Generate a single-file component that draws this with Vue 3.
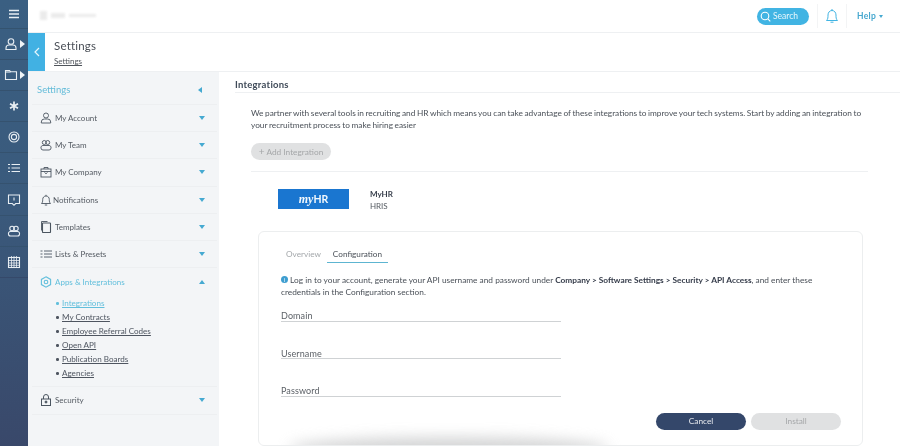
<script setup>
const railItems = [
  { id: 'person', arrow: true },
  { id: 'folder', arrow: true },
  { id: 'star' },
  { id: 'target' },
  { id: 'list' },
  { id: 'message' },
  { id: 'team' },
  { id: 'calendar' }
]
const menu = [
  { id: 'person', label: 'My Account' },
  { id: 'team', label: 'My Team' },
  { id: 'company', label: 'My Company' },
  { id: 'bell', label: 'Notifications', tight: true },
  { id: 'templates', label: 'Templates' },
  { id: 'list', label: 'Lists & Presets' }
]
const subs = ['Integrations', 'My Contracts', 'Employee Referral Codes', 'Open API', 'Publication Boards', 'Agencies']
const fields = ['Domain', 'Username', 'Password']
</script>

<template>
  <div class="app">
    <nav class="rail">
      <div class="rail-top">
        <svg width="12" height="10" viewBox="0 0 12 10"><path d="M1 1.500h10M1 5h10M1 8.500h10" stroke="#e8eef3" stroke-width="1.300" fill="none"/></svg>
      </div>
      <div v-for="item in railItems" :key="item.id" class="rail-item">
        <svg class="ri" width="14" height="14" viewBox="0 0 14 14" fill="none" stroke="#e8eef3" stroke-width="1.100">
          <template v-if="item.id === 'person'"><circle cx="7" cy="4.500" r="2.800"/><path d="M2 12.500v-1.500a3 3 0 0 1 3-3h4a3 3 0 0 1 3 3v1.500z"/></template>
          <template v-else-if="item.id === 'folder'"><path d="M1.500 11.500v-9h4l1 1.200h6v7.800z"/><path d="M1.500 4h5"/></template>
          <template v-else-if="item.id === 'star'"><path d="M7 2.500v9M3 4.700l8 4.600M11 4.700l-8 4.600" stroke-width="1.700"/></template>
          <template v-else-if="item.id === 'target'"><circle cx="7" cy="7" r="5"/><circle cx="7" cy="7" r="2.600"/></template>
          <template v-else-if="item.id === 'list'"><path d="M4.500 3.500h8.500M4.500 7h8.500M4.500 10.500h8.500M1 3.500h2M1 7h2M1 10.500h2" stroke-width="1.200"/></template>
          <template v-else-if="item.id === 'message'"><path d="M1.500 2h11v8.500h-3.800l-1.700 1.800-1.700-1.800h-3.800z"/><path d="M7 4.500v3"/></template>
          <template v-else-if="item.id === 'team'"><circle cx="5" cy="4.500" r="2.200"/><circle cx="9" cy="4.500" r="2.200"/><path d="M1.500 10a2 2 0 0 1 2-2.500h7a2 2 0 0 1 2 2.500 2 2 0 0 1-2 2h-7a2 2 0 0 1-2-2z"/></template>
          <template v-else><rect x="1.500" y="2.500" width="11" height="10"/><path d="M1.500 5.500h11M1.500 8h11M1.500 10.300h11M4.500 1v11.500M7 1v11.500M9.500 1v11.500" stroke-width=".8"/></template>
        </svg>
        <span v-if="item.arrow" class="rail-arrow"></span>
      </div>
    </nav>

    <div class="column">
      <header class="topbar">
        <div class="logo-blur"><span></span><span></span><span></span></div>
        <div class="top-actions">
          <button class="search">
            <svg width="11" height="11" viewBox="0 0 11 11" fill="none" stroke="#fff" stroke-width="1.100"><circle cx="5" cy="5" r="3.800"/><path d="M7.800 7.800l2.500 2.500"/></svg>
            Search
          </button>
          <div class="bell-box">
            <svg width="14" height="16" viewBox="0 0 14 16" fill="none" stroke="#41b4e3" stroke-width="1"><path d="M1.500 12.500c1.500-1.500 1.500-3 1.500-5.500 0-2.500 1.700-4.500 4-4.500s4 2 4 4.500c0 2.500 0 4 1.500 5.500z"/><path d="M7 1v1.500M5.500 14.200h3"/></svg>
          </div>
          <div class="help">Help <span class="caret-down small"></span></div>
        </div>
      </header>

      <div class="page-head">
        <div class="back">
          <svg width="6" height="10" viewBox="0 0 6 10" fill="none" stroke="#e6f6fc" stroke-width="1.200"><path d="M5 1L1 5l4 4"/></svg>
        </div>
        <div class="crumbs">
          <div class="page-title">Settings</div>
          <a class="crumb">Settings</a>
        </div>
      </div>

      <div class="body">
        <aside class="side">
          <div class="side-head">
            <span>Settings</span>
            <span class="caret-left"></span>
          </div>
          <div v-for="m in menu" :key="m.label" class="row">
            <svg class="mi" width="12" height="12" viewBox="0 0 12 12" fill="none" stroke="#4b5560" stroke-width=".9">
              <template v-if="m.id === 'person'"><circle cx="6" cy="3.500" r="2.500"/><path d="M1.300 11v-1a3 3 0 0 1 3-3h3.400a3 3 0 0 1 3 3v1z"/></template>
              <template v-else-if="m.id === 'team'"><circle cx="4.300" cy="3.500" r="2"/><circle cx="7.700" cy="3.500" r="2"/><path d="M1 9a2 2 0 0 1 2-2.500h6a2 2 0 0 1 2 2.500 2 2 0 0 1-2 2h-6a2 2 0 0 1-2-2z"/></template>
              <template v-else-if="m.id === 'company'"><rect x="1" y="3" width="10" height="8"/><path d="M4 3v-1.500h4v1.500M1 5.500h10M4.500 6.500l1.500 1.200 1.500-1.200"/></template>
              <template v-else-if="m.id === 'bell'"><path d="M1.500 9.500c1-1 1.200-2 1.200-4 0-2 1.300-3.500 3.300-3.500s3.300 1.500 3.300 3.500c0 2 .2 3 1.200 4z"/><path d="M6 .8v1.200M4.800 11h2.400"/></template>
              <template v-else-if="m.id === 'templates'"><rect x="2.500" y="2" width="8" height="9.500" rx=".6" stroke-width="1.100"/><path d="M1.500 9.500v-9h6"/></template>
              <template v-else><path d="M4 3h8M4 6h8M4 9h8M.5 3h2M.5 6h2M.5 9h2"/></template>
            </svg>
            <span class="row-label" :class="{ tight: m.tight }">{{ m.label }}</span>
            <span class="caret-down"></span>
          </div>
          <div class="group">
            <div class="row row-open">
              <svg class="mi" width="12" height="12" viewBox="0 0 12 12" fill="none" stroke="#62bfdc" stroke-width="1.100"><path d="M6 .8l4.600 2.600v5.200L6 11.200 1.400 8.600V3.400z"/><circle cx="6" cy="6" r="1.800"/></svg>
              <span class="row-label">Apps &amp; Integrations</span>
              <span class="caret-up"></span>
            </div>
            <ul class="subs">
              <li v-for="(s, i) in subs" :key="s" :class="{ on: i === 0 }"><a>{{ s }}</a></li>
            </ul>
          </div>
          <div class="row">
            <svg class="mi" width="12" height="12" viewBox="0 0 12 12" fill="none" stroke="#4b5560" stroke-width="1"><rect x="1.500" y="5" width="9" height="6.500"/><path d="M3.500 5v-2a2.500 2.500 0 0 1 5 0v2"/><circle cx="6" cy="8" r="1" fill="#4b5560"/></svg>
            <span class="row-label">Security</span>
            <span class="caret-down"></span>
          </div>
        </aside>

        <main class="main">
          <h2 class="main-title">Integrations</h2>
          <section class="content">
            <p class="intro">We partner with several tools in recruiting and HR which means you can take advantage of these integrations to improve your tech systems. Start by adding an integration to your recruitment process to make hiring easier</p>
            <button class="add"><span class="plus">+</span> Add Integration</button>
            <div class="provider">
              <div class="brand"><i>my</i>HR</div>
              <div class="provider-text">
                <strong>MyHR</strong>
                <span>HRIS</span>
              </div>
            </div>
          </section>
          <section class="card">
            <div class="tabs">
              <span class="tab">Overview</span>
              <span class="tab active">Configuration</span>
            </div>
            <p class="note">
              <span class="info">i</span> Log in to your account, generate your API username and password under <b>Company &gt; Software Settings &gt; Security &gt; API Access</b>, and enter these credentials in the Configuration section.
            </p>
            <div class="fields">
              <div v-for="f in fields" :key="f" class="field">{{ f }}</div>
            </div>
            <div class="actions">
              <button class="cancel">Cancel</button>
              <button class="install">Install</button>
            </div>
            <div class="smudge"></div>
          </section>
        </main>
      </div>
    </div>
  </div>
</template>

<style>
html, body { margin: 0; background: #fff; overflow: hidden; }
</style>

<style scoped>
.app { display: flex; width: 900px; height: 446px; overflow: hidden; font-family: Lato, "Open Sans", sans-serif; color: #4a5058; background: #fff; filter: blur(.35px); }
button { font-family: inherit; border: 0; }

.rail { width: 28px; flex: none; background: linear-gradient(180deg, #3a5f82 0%, #3a5a7c 45%, #39486a 100%); display: flex; flex-direction: column; }
.rail-top { height: 28px; display: flex; align-items: center; justify-content: center; border-bottom: 1px solid #34536f; }
.rail-item { height: 31.100px; display: flex; align-items: center; padding-left: 4px; gap: 2px; border-bottom: 1px solid #35526f; box-sizing: border-box; position: relative; }
.rail-item:nth-child(n+4) { padding-left: 7px; }
.rail-item:last-child { border-bottom: 1px solid #35496a; }
.rail-arrow { width: 0; height: 0; border-left: 5px solid #f0f4f7; border-top: 4px solid transparent; border-bottom: 4px solid transparent; }

.column { flex: 1; min-width: 0; display: flex; flex-direction: column; }
.topbar { height: 32px; flex: none; border-bottom: 1px solid #eef0f2; display: flex; align-items: center; justify-content: space-between; }
.logo-blur { margin: 0 0 2px 12px; display: flex; align-items: center; gap: 4px; filter: blur(1.200px); opacity: .4; }
.logo-blur span { display: block; height: 5px; background: #cfcfcf; }
.logo-blur span:nth-child(1) { width: 7px; height: 9px; }
.logo-blur span:nth-child(2) { width: 14px; }
.logo-blur span:nth-child(3) { width: 27px; height: 3px; }
.top-actions { display: flex; align-items: center; height: 100%; }
.search { width: 52px; height: 17px; padding: 0 0 0 3px; border-radius: 9px; background: #41b4e3; color: #e9f7fc; font-size: 8.500px; display: flex; align-items: center; gap: 2px; }
.bell-box { width: 30px; margin-left: 8px; height: 24px; display: flex; align-items: center; justify-content: center; border-left: 1px solid #f3f4f5; border-right: 1px solid #f3f4f5; box-sizing: border-box; }
.help { width: 53px; padding-left: 10px; box-sizing: border-box; color: #45a7cf; font-size: 8.500px; font-weight: 700; letter-spacing: .3px; display: flex; align-items: center; gap: 3px; }

.page-head { height: 39px; flex: none; display: flex; border-bottom: 1px solid #eef0f2; box-sizing: border-box; }
.back { width: 17px; background: #41b1e3; display: flex; align-items: center; justify-content: center; }
.crumbs { padding: 6px 0 0 9px; }
.page-title { font-size: 11.500px; line-height: 14px; color: #4a4f57; letter-spacing: .2px; }
.crumb { display: block; margin-top: 3px; font-size: 8px; line-height: 11px; color: #50555c; text-decoration: underline; }

.body { flex: 1; min-height: 0; display: flex; }
.side { width: 191px; flex: none; background: #f3f5f7; padding: 0 2px 0 4px; box-sizing: border-box; }
.side-head { height: 33px; padding: 3px 15px 0 5px; box-sizing: border-box; display: flex; align-items: center; justify-content: space-between; color: #64bcd9; font-size: 9.500px; border-bottom: 1px solid #edeff1; }
.row { height: 27.200px; box-sizing: border-box; padding: 0 12px 0 8px; display: flex; align-items: center; border-bottom: 1px solid #edeff1; color: #545a62; font-size: 8px; }
.mi { flex: none; }
.row-label { margin-left: 3px; flex: 1; }
.row-label.tight { margin-left: 1px; }
.group { border-bottom: 1px solid #edeff1; }
.row-open { border-bottom: 0; color: #62bfdc; }
.caret-down, .caret-up { width: 0; height: 0; border-left: 3.500px solid transparent; border-right: 3.500px solid transparent; }
.caret-down { border-top: 4px solid #45a9d1; }
.caret-down.small { border-left-width: 2.500px; border-right-width: 2.500px; border-top-width: 3px; }
.caret-up { border-bottom: 4px solid #45a9d1; }
.caret-left { width: 0; height: 0; border-right: 4px solid #45a9d1; border-top: 3.500px solid transparent; border-bottom: 3.500px solid transparent; }
.subs { margin: 0; padding: 1px 0 6px 30px; list-style: none; font-size: 8.100px; line-height: 14px; color: #4e5560; }
.subs li { position: relative; }
.subs li::before { content: ""; position: absolute; left: -6px; top: 6px; width: 2.500px; height: 2.500px; border-radius: 50%; background: #4e5560; }
.subs a { text-decoration: underline; }
.subs .on { color: #62bfdc; }
.subs .on::before { background: #62bfdc; }

.main { flex: 1; min-width: 0; display: flex; flex-direction: column; padding: 6px 0 0 16px; }
.main-title { margin: 0; height: 14px; font-size: 9.500px; line-height: 14px; color: #3f4a58; font-weight: 700; letter-spacing: .25px; border-bottom: 1px solid #eef0f2; }
.content { margin: 0 32px 0 16px; }
.intro { margin: 14px 0 0; font-size: 8.300px; line-height: 12px; word-spacing: -.55px; color: #4a5058; }
.add { display: block; width: 80px; height: 17px; margin-top: 12px; padding: 0 0 2px; border-radius: 9px; background: #e0e1e2; color: #a5a7a9; font-size: 8.300px; }
.plus { font-size: 10px; }
.provider { margin-top: 11px; padding: 17px 0 0 27px; border-top: 1px solid #eef0f2; display: flex; align-items: flex-start; gap: 21px; }
.brand { width: 71px; height: 20px; background: #1a76d0; color: #f2f8fd; font-size: 10.500px; font-weight: 700; display: flex; align-items: center; justify-content: center; }
.brand i { font-family: "Liberation Serif", serif; font-size: 12px; }
.provider-text { display: flex; flex-direction: column; font-size: 8px; line-height: 11.500px; }
.provider-text strong { color: #353c49; }
.provider-text span { color: #555b62; }

.card { position: relative; margin: 19px 37px 0 23px; height: 215px; flex: none; box-sizing: border-box; border: 1px solid #eceeef; border-radius: 6px; padding: 16px 22px 0; overflow: hidden; }
.tabs { display: flex; gap: 6px; padding-left: 5px; }
.tab { height: 14px; line-height: 13px; font-size: 8.200px; color: #a4a8ab; }
.tab.active { color: #4a5058; padding: 0 6px; border-bottom: 1.500px solid #5db5d1; }
.note { margin: 11px 0 0; width: 570px; font-size: 8.300px; line-height: 12px; color: #4a5058; }
.note b { color: #333a48; }
.info { display: inline-block; width: 7px; height: 7px; line-height: 7px; border-radius: 50%; background: #3e9ed0; color: #fff; font-size: 6px; text-align: center; vertical-align: 1px; }
.fields { margin-top: 11px; width: 280px; display: flex; flex-direction: column; gap: 25px; }
.field { height: 11.500px; line-height: 13px; font-size: 9px; letter-spacing: .1px; color: #5c6167; border-bottom: 1px solid #cfd2d4; }
.actions { margin: 16px -1px 0 0; display: flex; justify-content: flex-end; gap: 5px; }
.actions button { width: 90px; height: 17px; padding: 0; border-radius: 9px; font-size: 8.300px; }
.cancel { background: #34476a; color: #e6e9ee; }
.install { background: #e0e1e2; color: #a5a7a9; }
.smudge { position: absolute; left: 30px; bottom: -14px; width: 320px; height: 22px; border-radius: 50%; background: #c6c7c8; filter: blur(7px); opacity: .75; }
</style>
